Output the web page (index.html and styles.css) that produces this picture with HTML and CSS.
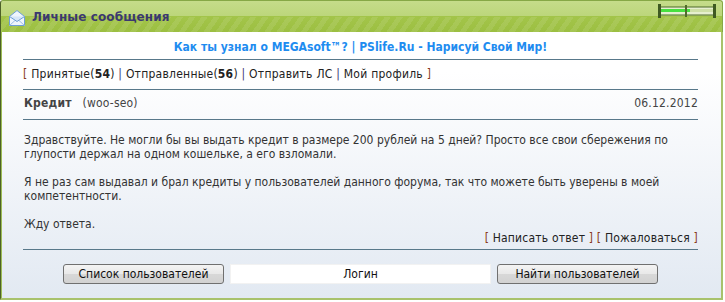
FILE: index.html
```html
<!DOCTYPE html>
<html lang="ru">
<head>
  <meta charset="UTF-8">
  <title>Личные сообщения</title>
  <link rel="stylesheet" href="styles.css">
</head>
<body>
  <div class="window">
    <div class="titlebar">
      <svg class="mail-icon" width="18" height="18" viewBox="0 0 18 18">
        <path d="M1.5 7.5 L9 1.5 L16.5 7.5 V16.5 H1.5 Z" fill="#eef5fd" stroke="#6f9fd6" stroke-width="1"/>
        <path d="M1.5 7.5 L9 12.5 L16.5 7.5" fill="#d6e6f8" stroke="#6f9fd6" stroke-width="1"/>
        <path d="M1.5 16.5 L7 11.5 M16.5 16.5 L11 11.5" fill="none" stroke="#9dbde6" stroke-width="1"/>
      </svg>
      <span class="title">Личные сообщения</span>
      <svg class="slider" width="58" height="15" viewBox="0 0 58 15">
        <rect x="1" y="3" width="55" height="8" fill="#e6efcf" stroke="#4f6b2a" stroke-width="1"/>
        <rect x="2" y="5" width="30" height="3" fill="#47e03f"/>
        <rect x="32" y="5" width="23" height="3" fill="#cfe0a8"/>
        <rect x="0" y="0" width="3" height="14" fill="#3f5a22"/>
        <rect x="55" y="0" width="3" height="14" fill="#3f5a22"/>
        <rect x="27" y="1" width="2" height="12" fill="#4f6b2a"/>
      </svg>
    </div>
    <div class="content">
      <div class="promo">
        <a href="#">Как ты узнал о MEGAsoft™?</a> | <a href="#">PSlife.Ru - Нарисуй Свой Мир!</a>
      </div>
      <div class="row nav">
        <span class="br">[</span> <a href="#">Принятые(<b>54</b>)</a> | <a href="#">Отправленные(<b>56</b>)</a> | <a href="#">Отправить ЛС</a> | <a href="#">Мой профиль</a> <span class="br">]</span>
      </div>
      <div class="row subject">
        <span><b>Кредит</b> &nbsp; (woo-seo)</span>
        <span>06.12.2012</span>
      </div>
      <div class="message">
        Здравствуйте. Не могли бы вы выдать кредит в размере 200 рублей на 5 дней? Просто все свои сбережения по глупости держал на одном кошельке, а его взломали.<br><br>
        Я не раз сам выдавал и брал кредиты у пользователей данного форума, так что можете быть уверены в моей компетентности.<br><br>
        Жду ответа.
        <div class="actions">
          <span class="br">[</span> <a href="#">Написать ответ</a> <span class="br">]</span> <span class="br">[</span> <a href="#">Пожаловаться</a> <span class="br">]</span>
        </div>
      </div>
      <div class="search">
        <button class="btn">Список пользователей</button>
        <input class="login" type="text" value="Логин">
        <button class="btn">Найти пользователей</button>
      </div>
    </div>
  </div>
</body>
</html>
```

FILE: styles.css
```css
body {
  margin: 0;
  padding: 0;
  background-color: #fff;
  font-family: "DejaVu Sans Condensed", "DejaVu Sans", sans-serif;
  font-size: 12px;
  color: #333;
}

.window {
  width: 723px;
  height: 300px;
  display: flex;
  flex-direction: column;
}

.titlebar {
  height: 31px;
  flex-shrink: 0;
  display: flex;
  align-items: center;
  padding: 0 6px 0 7px;
  border-top: 1px solid #86a846;
  border-left: 1px solid #4d6128;
  border-right: 1px solid #86a846;
  border-radius: 3px 3px 0 0;
  background:
    repeating-linear-gradient(-55deg, rgba(255,255,255,0.09) 0 5px, rgba(255,255,255,0) 5px 10px) 0 16px / 100% 15px no-repeat,
    linear-gradient(#c5dc8a, #bcd67b 15px, #a3c54a 15px, #9cbf42);
}

.mail-icon {
  flex-shrink: 0;
  margin-top: 2px;
}

.title {
  margin-left: 6px;
  font-family: "DejaVu Sans", sans-serif;
  font-size: 12px;
  font-weight: bold;
  letter-spacing: 0.1px;
  color: #3b3970;
}

.slider {
  margin-left: auto;
  margin-top: -10px;
}

.content {
  flex: 1;
  padding: 0 23px 0 22px;
  border-left: 1px solid #4d6128;
  box-shadow: inset 1px 0 0 #9dbd55;
  border-right: 2px solid #a8c26c;
  border-bottom: 2px solid #a8c26c;
  background: linear-gradient(#ffffff 40px, #e2e9f2);
}

.promo {
  text-align: center;
  padding: 8px 0 5px;
  border-bottom: 1px solid #58788a;
  font-weight: bold;
  color: #1e8cf0;
}

.promo a {
  color: #1e8cf0;
  text-decoration: none;
}

a {
  color: #222;
  text-decoration: none;
}

.row {
  padding: 7px 0;
  border-bottom: 1px solid #58788a;
  line-height: 15px;
  letter-spacing: 0.25px;
}

.nav {
  color: #3b3970;
}

.br {
  color: #8a3b1c;
}

.subject {
  display: flex;
  justify-content: space-between;
  color: #444;
  padding: 6px 0 8px 1px;
  letter-spacing: 0.2px;
}

.message {
  padding: 13px 0 4px 1px;
  line-height: 14px;
  letter-spacing: 0;
  border-bottom: 1px solid #58788a;
}

.actions {
  text-align: right;
  letter-spacing: 0.2px;
}

.search {
  display: flex;
  justify-content: center;
  gap: 6px;
  padding-top: 14px;
}

.btn {
  width: 161px;
  height: 20px;
  padding: 0;
  font-family: "DejaVu Sans Condensed", "DejaVu Sans", sans-serif;
  font-size: 12px;
  color: #111;
  border: 1px solid #707070;
  border-radius: 3px;
  background: linear-gradient(#f4f4f4, #e8e8e8 50%, #d8d8d8 50%, #d2d2d2);
}

.login {
  width: 261px;
  height: 20px;
  box-sizing: border-box;
  padding: 0;
  border: 1px solid #f2f2f2;
  background: #fff;
  text-align: center;
  font-family: "DejaVu Sans Condensed", "DejaVu Sans", sans-serif;
  font-size: 12px;
  color: #111;
}
```
